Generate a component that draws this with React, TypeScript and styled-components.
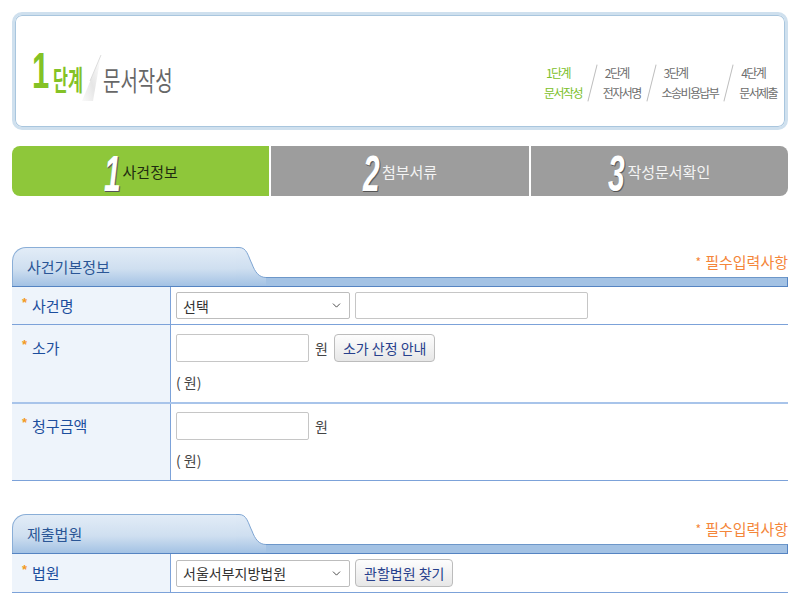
import React from 'react';
import styled, { createGlobalStyle } from 'styled-components';
import { ChevronDown } from 'lucide-react';

const GlobalStyle = createGlobalStyle`
  body {
    margin: 0;
    background: #fff;
    font-family: "Noto Sans CJK KR", "Noto Sans", sans-serif;
  }
`;

const Page = styled.div`
  width: 776px;
  padding: 12px 12px 0;
`;

/* ---------- header ---------- */
const Header = styled.header`
  height: 118px;
  box-sizing: border-box;
  border: 3px solid #cfe0ee;
  border-radius: 10px;
  box-shadow: inset 0 0 0 1px #a9c6de;
  display: flex;
  align-items: flex-end;
  justify-content: space-between;
  padding: 0 8px 34px 17px;
`;

const Title = styled.h1`
  margin: 0;
  display: flex;
  align-items: flex-end;
  font-weight: normal;
  line-height: 1;
`;

const TitleNum = styled.span`
  display: inline-block;
  width: 21px;
  font-family: "Liberation Sans", Arial, sans-serif;
  font-weight: bold;
  font-size: 50px;
  color: #84c226;
  transform: scaleX(0.62);
  transform-origin: left bottom;
  margin-bottom: -3px;
`;

const TitleStep = styled.span`
  display: inline-block;
  width: 27px;
  font-size: 28px;
  font-weight: bold;
  color: #84c226;
  transform: scaleX(0.58);
  transform-origin: left bottom;
  white-space: nowrap;
`;

const TitleName = styled.span`
  display: inline-block;
  font-size: 27px;
  color: #676767;
  transform: scaleX(0.7);
  transform-origin: left bottom;
  white-space: nowrap;
  margin-left: 1px;
`;

const Fold = () => (
  <svg width="22" height="50" viewBox="0 0 22 50" style={{ marginBottom: -10 }}>
    <defs>
      <linearGradient id="fold" x1="1" y1="0" x2="0" y2="1">
        <stop offset="0" stopColor="#ffffff" />
        <stop offset="0.55" stopColor="#e6e6e6" />
        <stop offset="1" stopColor="#fafafa" />
      </linearGradient>
    </defs>
    <polygon points="21,2 2,48 13,48" fill="url(#fold)" />
    <line x1="21" y1="2" x2="10" y2="28" stroke="#d4d4d4" strokeWidth="0.8" />
  </svg>
);

const StepList = styled.ol`
  list-style: none;
  margin: 0 0 -10px;
  padding: 0;
  display: flex;
  align-items: center;
  gap: 10px;
`;

const StepItem = styled.li<{ $active?: boolean }>`
  display: flex;
  flex-direction: column;
  font-size: 12px;
  line-height: 20px;
  letter-spacing: -1.6px;
  color: ${(p) => (p.$active ? '#7cbf2a' : '#6d6d6d')};
  white-space: nowrap;
  span:first-child {
    padding-left: 2px;
  }
`;

const StepSlash = styled.span`
  width: 1px;
  height: 38px;
  background: #bdbdbd;
  transform: rotate(14deg);
`;

/* ---------- step tabs ---------- */
const TabBar = styled.nav`
  display: flex;
  gap: 2px;
  height: 50px;
  margin-top: 16px;
`;

const StageTab = styled.div<{ $active?: boolean; $first?: boolean; $last?: boolean }>`
  flex: 1;
  display: flex;
  align-items: center;
  justify-content: center;
  background: ${(p) => (p.$active ? '#8ec73a' : '#9d9d9d')};
  border-radius: ${(p) => (p.$first ? '8px 0 0 8px' : p.$last ? '0 8px 8px 0' : '0')};
  color: ${(p) => (p.$active ? '#1f2c10' : '#f4f4f4')};
  font-size: 15px;
`;

const StageNum = styled.span`
  display: inline-block;
  width: 19px;
  font-family: "Liberation Sans", Arial, sans-serif;
  font-weight: bold;
  font-style: italic;
  font-size: 50px;
  line-height: 1;
  color: #fff;
  text-shadow: 1px 1px 0 #555, 2px 1px 0 #777;
  transform: scaleX(0.6);
  transform-origin: left center;
  margin-top: 6px;
`;

/* ---------- sections ---------- */
const Section = styled.section<{ $gap: number }>`
  margin-top: ${(p) => p.$gap}px;
`;

const SectionHead = styled.div`
  display: flex;
  align-items: flex-end;
  height: 39px;
  border-bottom: 1px solid #5584c2;
`;

const HeadTab = styled.h2`
  margin: 0;
  width: 224px;
  height: 39px;
  box-sizing: border-box;
  border-top: 1px solid #8aaed7;
  border-left: 1px solid #8aaed7;
  border-top-left-radius: 14px;
  background: linear-gradient(#e2ecf7, #cfdff0 55%, #a3c2e4);
  padding: 8px 0 0 14px;
  font-size: 15px;
  line-height: 22px;
  font-weight: normal;
  color: #2a5696;
`;

const HeadCurve = () => (
  <svg width="30" height="39" viewBox="0 0 30 39" style={{ display: 'block' }}>
    <defs>
      <linearGradient id="tabg" x1="0" y1="0" x2="0" y2="39" gradientUnits="userSpaceOnUse">
        <stop offset="0" stopColor="#e2ecf7" />
        <stop offset="0.55" stopColor="#cfdff0" />
        <stop offset="1" stopColor="#a3c2e4" />
      </linearGradient>
    </defs>
    <rect x="0" y="30" width="30" height="9" fill="#a3c2e4" />
    <path d="M0,0.5 L3,0.5 C11,0.5 12,9 16,17 C19,25 23,30.5 30,30.5 L30,39 L0,39 Z" fill="url(#tabg)" />
    <path d="M0,0.5 L3,0.5 C11,0.5 12,9 16,17 C19,25 23,30.5 30,30.5" fill="none" stroke="#7ea5d3" />
  </svg>
);

const HeadRight = styled.div`
  flex: 1;
  display: flex;
  flex-direction: column;
  justify-content: flex-end;
  height: 39px;
`;

const Required = styled.div`
  text-align: right;
  font-size: 15px;
  line-height: 18px;
  color: #f4863a;
  margin-bottom: 6px;
  b {
    font-weight: normal;
    font-size: 12px;
    margin-right: 4px;
    vertical-align: 1px;
  }
`;

const Band = styled.div`
  height: 9px;
  box-sizing: border-box;
  border-top: 1px solid #6d97c9;
  border-right: 1px solid #5584c2;
  background: #a3c2e4;
`;

const Row = styled.div<{ $thick?: boolean }>`
  display: grid;
  grid-template-columns: 159px 1fr;
  border-bottom: ${(p) => (p.$thick ? '2px solid #a8c4ea' : '1px solid #7ca2d9')};
`;

const Label = styled.div<{ $pad: number }>`
  background: #eef4fb;
  border-right: 1px solid #7ca2d9;
  padding: ${(p) => p.$pad}px 0 0 10px;
  display: flex;
  align-items: flex-start;
  gap: 5px;
  font-size: 15px;
  line-height: 28px;
  color: #1c4e9d;
`;

const Star = styled.span`
  font-family: "Liberation Sans", Arial, sans-serif;
  font-weight: bold;
  font-size: 13px;
  line-height: 22px;
  color: #f39a1e;
`;

const Cell = styled.div<{ $pad: number }>`
  padding: ${(p) => p.$pad}px 5px ${(p) => (p.$pad > 6 ? 11 : p.$pad)}px;
  display: flex;
  flex-direction: column;
  font-size: 14px;
  color: #444;
`;

const Line = styled.div`
  display: flex;
  align-items: center;
  gap: 5px;
`;

const Note = styled.div`
  margin-top: 11px;
  line-height: 18px;
`;

const Unit = styled.span`
  margin: 0 1px;
`;

const TextBox = styled.input<{ $w: number; $h?: number }>`
  width: ${(p) => p.$w}px;
  height: ${(p) => p.$h ?? 28}px;
  box-sizing: border-box;
  border: 1px solid #c6c6c6;
  border-radius: 2px;
  padding: 0 5px;
  font: inherit;
  outline: none;
`;

const SelectWrap = styled.div`
  position: relative;
  width: 174px;
  height: 27px;
  svg {
    position: absolute;
    right: 7px;
    top: 7px;
    pointer-events: none;
  }
`;

const Select = styled.select`
  appearance: none;
  width: 100%;
  height: 100%;
  box-sizing: border-box;
  border: 1px solid #bdbdbd;
  border-radius: 2px;
  background: #fff;
  padding: 0 6px;
  font: inherit;
  font-size: 14px;
  color: #333;
`;

const Button = styled.button`
  height: 28px;
  box-sizing: border-box;
  padding: 0 8px;
  border: 1px solid #bcbcbc;
  border-radius: 4px;
  background: linear-gradient(#fdfdfd, #e7e7e7);
  font: inherit;
  font-size: 14px;
  color: #27408c;
  white-space: nowrap;
`;

const Dropdown = ({ value }: { value: string }) => (
  <SelectWrap>
    <Select defaultValue={value}>
      <option>{value}</option>
    </Select>
    <ChevronDown size={13} strokeWidth={1.6} color="#333" />
  </SelectWrap>
);

const SectionTitle = ({ title }: { title: string }) => (
  <SectionHead>
    <HeadTab>{title}</HeadTab>
    <HeadCurve />
    <HeadRight>
      <Required>
        <b>*</b>필수입력사항
      </Required>
      <Band />
    </HeadRight>
  </SectionHead>
);

const steps = [
  { top: '1단계', bottom: '문서작성', active: true },
  { top: '2단계', bottom: '전자서명' },
  { top: '3단계', bottom: '소송비용납부' },
  { top: '4단계', bottom: '문서제출' },
];

const stages = ['사건정보', '첨부서류', '작성문서확인'];

export default function App() {
  return (
    <>
      <GlobalStyle />
      <Page>
        <Header>
          <Title>
            <TitleNum>1</TitleNum>
            <TitleStep>단계</TitleStep>
            <Fold />
            <TitleName>문서작성</TitleName>
          </Title>
          <StepList>
            {steps.map((s, i) => (
              <React.Fragment key={s.top}>
                {i > 0 && <StepSlash />}
                <StepItem $active={s.active}>
                  <span>{s.top}</span>
                  <span>{s.bottom}</span>
                </StepItem>
              </React.Fragment>
            ))}
          </StepList>
        </Header>

        <TabBar>
          {stages.map((name, i) => (
            <StageTab key={name} $active={i === 0} $first={i === 0} $last={i === stages.length - 1}>
              <StageNum>{i + 1}</StageNum>
              {name}
            </StageTab>
          ))}
        </TabBar>

        <Section $gap={51}>
          <SectionTitle title="사건기본정보" />
          <Row>
            <Label $pad={5}>
              <Star>*</Star>사건명
            </Label>
            <Cell $pad={5}>
              <Line>
                <Dropdown value="선택" />
                <TextBox $w={233} $h={27} />
              </Line>
            </Cell>
          </Row>
          <Row $thick>
            <Label $pad={9}>
              <Star>*</Star>소가
            </Label>
            <Cell $pad={9}>
              <Line>
                <TextBox $w={133} />
                <Unit>원</Unit>
                <Button>소가 산정 안내</Button>
              </Line>
              <Note>( 원)</Note>
            </Cell>
          </Row>
          <Row>
            <Label $pad={8}>
              <Star>*</Star>청구금액
            </Label>
            <Cell $pad={8}>
              <Line>
                <TextBox $w={133} />
                <Unit>원</Unit>
              </Line>
              <Note>( 원)</Note>
            </Cell>
          </Row>
        </Section>

        <Section $gap={33}>
          <SectionTitle title="제출법원" />
          <Row>
            <Label $pad={5}>
              <Star>*</Star>법원
            </Label>
            <Cell $pad={5}>
              <Line>
                <Dropdown value="서울서부지방법원" />
                <Button>관할법원 찾기</Button>
              </Line>
            </Cell>
          </Row>
        </Section>
      </Page>
    </>
  );
}
